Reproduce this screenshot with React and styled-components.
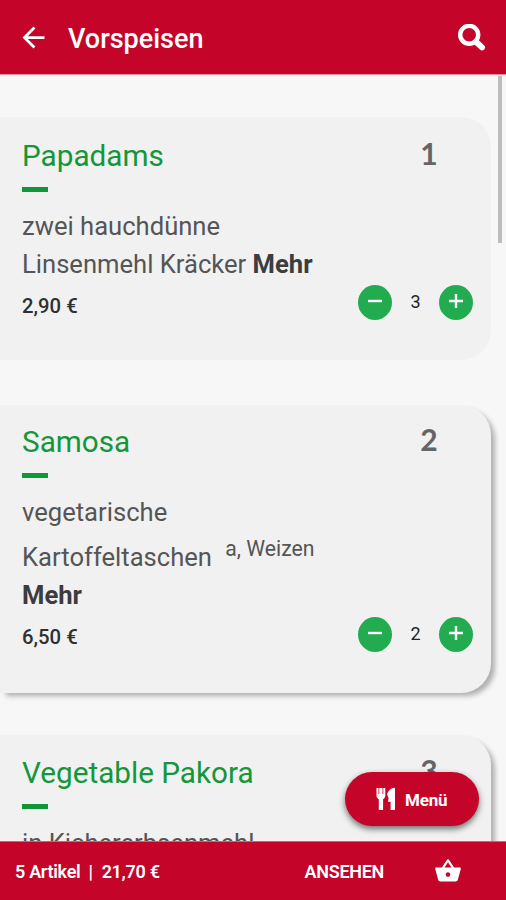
import styled, { createGlobalStyle } from "styled-components";
import { MdArrowBack, MdShoppingBasket } from "react-icons/md";

const GlobalStyle = createGlobalStyle`
  * {
    box-sizing: border-box;
  }
  body {
    margin: 0;
    font-family: Roboto, sans-serif;
  }
`;

const Screen = styled.div`
  position: relative;
  display: flex;
  flex-direction: column;
  height: 900px;
  background: #f7f7f7;
  overflow: hidden;
`;

const Header = styled.header`
  flex: none;
  display: flex;
  align-items: center;
  height: 75px;
  padding: 1px 20px 0 17px;
  background: #c50429;
  border-bottom: 1px solid #e9909a;
  color: #ffffff;

  h1 {
    flex: 1;
    margin: 2px 0 0 18px;
    font-weight: 500;
    font-size: 27px;
  }
`;

const List = styled.main`
  flex: 1;
  min-height: 0;
  padding-top: 42px;
  overflow: hidden;
`;

const Card = styled.article`
  display: flex;
  flex-direction: column;
  width: 491px;
  height: ${(props) => props.$height}px;
  margin-bottom: ${(props) => props.$gap}px;
  padding: ${(props) => props.$top}px 18px 0 22px;
  background: #f1f1f1;
  border-radius: 0 30px 30px 0;
  box-shadow: ${(props) =>
    props.$raised ? "5px 4px 5px -1px #b0b0b0" : "none"};
`;

const CardTop = styled.div`
  display: flex;
  justify-content: space-between;
  height: 50px;
  padding-right: 34px;

  h2 {
    margin: 0;
    font-weight: 400;
    font-size: 29.7px;
    line-height: 36px;
    color: #13973a;

    &::after {
      content: "";
      display: block;
      width: 26px;
      height: 5px;
      margin-top: 13px;
      background: #0f9636;
    }
  }
`;

const Position = styled.span`
  width: 20px;
  text-align: center;
  font-family: Lato, sans-serif;
  font-weight: 700;
  font-size: 30px;
  line-height: 31px;
  color: #656565;
`;

const Description = styled.p`
  width: 310px;
  margin: 19px 0 1px;
  font-size: 25.6px;
  line-height: 38px;
  color: #555555;
  white-space: nowrap;

  b {
    font-weight: 700;
    color: #3c3c3c;
  }
  sup {
    margin-left: 7px;
    font-size: 21.2px;
    line-height: 36px;
  }
`;

const CardBottom = styled.div`
  display: flex;
  justify-content: space-between;
  align-items: center;
  height: 36px;
`;

const Price = styled.span`
  padding-top: 8px;
  font-weight: 500;
  font-size: 20.3px;
  color: #303030;
`;

const Counter = styled.div`
  display: flex;
  align-items: center;
  margin-top: ${(props) => (props.$lowered ? "3px" : "0")};

  span {
    width: 47px;
    padding-bottom: 2px;
    text-align: center;
    font-size: 18px;
    color: #222222;
  }
`;

const RoundButton = styled.button`
  display: flex;
  align-items: center;
  justify-content: center;
  width: 34px;
  height: 35px;
  padding: 0 0 2px;
  border: none;
  border-radius: 50%;
  background: #22ac4f;
`;

const Scrollbar = styled.div`
  position: absolute;
  top: 76px;
  right: 4px;
  width: 4px;
  height: 167px;
  background: #bdbdbd;
`;

const MenuButton = styled.button`
  position: absolute;
  top: 772px;
  right: 27px;
  display: flex;
  align-items: center;
  width: 134px;
  height: 54px;
  padding: 0 0 0 31px;
  border: none;
  border-radius: 27px;
  background: #c50429;
  box-shadow: 0 3px 6px rgba(0, 0, 0, 0.55);
  color: #ffffff;
  font-family: Roboto, sans-serif;
  font-weight: 700;
  font-size: 17px;
  letter-spacing: -0.2px;

  span {
    margin: 2px 0 0 9px;
  }
`;

const Footer = styled.footer`
  flex: none;
  display: flex;
  align-items: center;
  height: 59px;
  padding: 0 44px 0 15px;
  border-top: 1px solid #d7606f;
  background: #c50429;
  color: #ffffff;
  font-weight: 600;
  font-size: 18px;
  letter-spacing: -0.3px;

  .total {
    flex: 1;
  }
  .divider {
    margin: 0 9px 0 8px;
  }
  .view {
    margin-right: 50px;
  }
`;

const SearchIcon = () => (
  <svg width="28" height="28" viewBox="0 0 28 28" fill="none" stroke="#ffffff">
    <circle cx="11.2" cy="10.8" r="9" strokeWidth="4.4" />
    <path
      d="M18 17.8 L24 23.4"
      strokeWidth="6"
      strokeLinecap="round"
    />
  </svg>
);

const CutleryIcon = () => (
  <svg width="20" height="24" viewBox="0 0 20 24" fill="#ffffff">
    <path d="M.5 1h2v6h.8V1h3.200v6h.8V1h2v7.500c0 2-.8 3-2.200 3.700V23H2.800V12.200C1.300 11.500.5 10.500.5 8.500z" />
    <path d="M19 .8V23h-4.400v-8.200h-2.600l.6-3.600-1.500-3.700C12 3.600 15 1 19 .8z" />
  </svg>
);

const SignIcon = ({ plus }) => (
  <svg width="14" height="14" viewBox="0 0 14 14" stroke="#ffffff" strokeWidth="2.4">
    <path d={plus ? "M0 7h14M7 0v14" : "M0 7h14"} />
  </svg>
);

const dishes = [
  {
    name: "Papadams",
    height: 243,
    gap: 45,
    top: 21,
    price: "2,90 €",
    count: 3,
    text: (
      <>
        zwei hauchdünne
        <br />
        Linsenmehl Kräcker <b>Mehr</b>
      </>
    ),
  },
  {
    name: "Samosa",
    height: 288,
    gap: 42,
    top: 19,
    raised: true,
    price: "6,50 €",
    count: 2,
    text: (
      <>
        vegetarische
        <br />
        Kartoffeltaschen <sup>a, Weizen</sup>
        <br />
        <b>Mehr</b>
      </>
    ),
  },
  {
    name: "Vegetable Pakora",
    height: 288,
    gap: 42,
    top: 20,
    raised: true,
    text: "in Kichererbsenmehl",
  },
];

const App = () => {
  return (
    <>
      <GlobalStyle />
      <Screen>
        <Header>
          <MdArrowBack size={33} />
          <h1>Vorspeisen</h1>
          <SearchIcon />
        </Header>

        <List>
          {dishes.map((dish, index) => (
            <Card
              key={dish.name}
              $height={dish.height}
              $gap={dish.gap}
              $top={dish.top}
              $raised={dish.raised}
            >
              <CardTop>
                <h2>{dish.name}</h2>
                <Position>{index + 1}</Position>
              </CardTop>
              <Description>{dish.text}</Description>
              {dish.price && (
                <CardBottom>
                  <Price>{dish.price}</Price>
                  <Counter $lowered={dish.raised}>
                    <RoundButton>
                      <SignIcon />
                    </RoundButton>
                    <span>{dish.count}</span>
                    <RoundButton>
                      <SignIcon plus />
                    </RoundButton>
                  </Counter>
                </CardBottom>
              )}
            </Card>
          ))}
        </List>

        <Footer>
          <span className="total">
            5 Artikel<span className="divider">|</span>21,70 €
          </span>
          <span className="view">ANSEHEN</span>
          <MdShoppingBasket size={28} />
        </Footer>

        <Scrollbar />
        <MenuButton>
          <CutleryIcon />
          <span>Menü</span>
        </MenuButton>
      </Screen>
    </>
  );
};

export default App;
